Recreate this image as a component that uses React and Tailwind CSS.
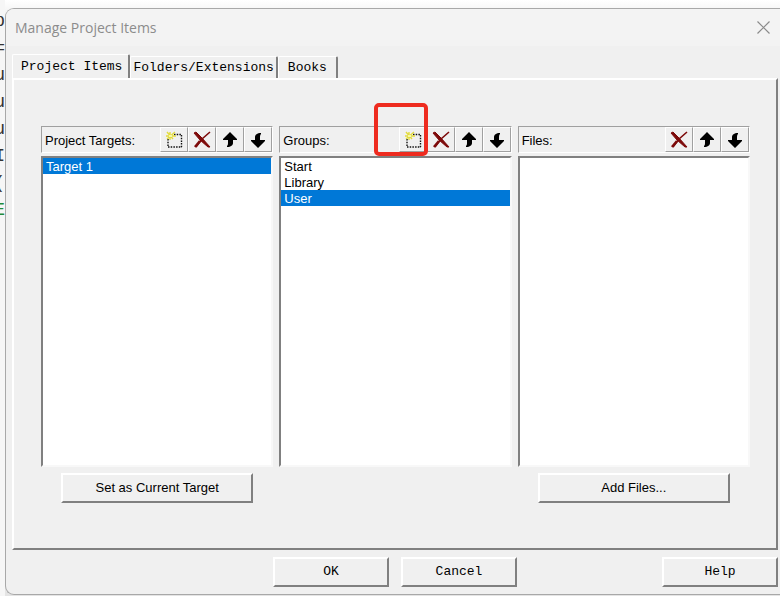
import { useState } from 'react';

const TABS = ['Project Items', 'Folders/Extensions', 'Books'];

const CODE_LINES = ['p', '=', 'u', 'u', 'u', 'I', '(', 'E'];

function NewIcon() {
  return (
    <svg width="18" height="18" viewBox="0 0 18 18" fill="none" aria-hidden="true">
      <path d="M9 3.5H17M16.5 4V16M3 16H17M3 8V16" stroke="#111" strokeWidth="1.4" strokeDasharray="1.5 1.2" />
      <path d="M5 1V9M1 5H11M2 1L8 8M10 1L2 8" stroke="#e3dc3c" strokeWidth="1.4" />
      <path d="M4 4H7V6H4Z" fill="#f7f6a8" />
    </svg>
  );
}

function DeleteIcon() {
  return (
    <svg width="18" height="18" viewBox="0 0 18 18" fill="none" stroke="#7d0a0a" aria-hidden="true">
      <path d="M1 2L3 1L9 7L17 16L15 16L7 9Z" fill="#7d0a0a" strokeWidth="1" />
      <path d="M17 1L9 8L3 16" strokeWidth="1.6" />
      <path d="M7 10L2 16" strokeWidth="2.6" />
    </svg>
  );
}

function UpIcon() {
  return (
    <svg width="16" height="16" viewBox="0 0 16 16" aria-hidden="true">
      <path d="M8 0L15 7V8H11V11C11 13 9 15 5 15V14C6 13 6 12 6 10V8H1V7Z" fill="#000" />
    </svg>
  );
}

function DownIcon() {
  return (
    <svg width="16" height="16" viewBox="0 0 16 16" aria-hidden="true">
      <path d="M8 16L1 9V8H5V5C5 3 7 1 11 1V2C10 3 10 4 10 6V8H15V9Z" fill="#000" />
    </svg>
  );
}

const ACTIONS = {
  new: { label: 'New (Insert)', Icon: NewIcon },
  delete: { label: 'Delete', Icon: DeleteIcon },
  up: { label: 'Move up', Icon: UpIcon },
  down: { label: 'Move down', Icon: DownIcon },
};

function PushButton({ children, className }) {
  return (
    <button
      type="button"
      className={`border-2 border-t-white border-l-white border-r-[#808080] border-b-[#808080] bg-[#f0f0f0] text-[13px] leading-4 ${className}`}
    >
      {children}
    </button>
  );
}

function ListColumn({ title, actions, items = [], initial, marked, footer }) {
  const [selected, setSelected] = useState(initial);

  return (
    <section className="min-w-0">
      <div className="relative flex h-[27px] items-stretch border border-t-[#a0a0a0] border-l-[#a0a0a0] border-r-white border-b-white">
        <h2 className="flex-1 self-center pt-[2px] pl-[3px] text-[13px] leading-4">{title}</h2>
        {actions.map((key) => {
          const { label, Icon } = ACTIONS[key];
          return (
            <button
              key={key}
              type="button"
              aria-label={label}
              className="flex w-7 items-center justify-center border border-t-white border-l-white border-r-[#a0a0a0] border-b-[#a0a0a0] bg-[#f0f0f0]"
            >
              <Icon />
            </button>
          );
        })}
        {marked && (
          <div className="pointer-events-none absolute -top-6 right-[83px] h-[53px] w-[54px] rounded-[5px] border-4 border-[#ee2b1f]" />
        )}
      </div>

      <ul className="mt-[3px] h-[311px] border-2 border-t-[#808080] border-l-[#808080] border-r-[#f8f8f8] border-b-[#f8f8f8] bg-white text-[13px]">
        {items.map((item) => (
          <li key={item}>
            <button
              type="button"
              onClick={() => setSelected(item)}
              className={`block w-full pt-px pl-[3px] text-left leading-[15px] ${
                selected === item ? 'bg-[#0078d7] text-white' : 'text-black'
              }`}
            >
              {item}
            </button>
          </li>
        ))}
      </ul>

      {footer && <PushButton className="mx-auto mt-[6px] block h-[30px] w-[192px]">{footer}</PushButton>}
    </section>
  );
}

export default function App() {
  const [tab, setTab] = useState(TABS[0]);

  return (
    <div className="flex min-h-screen bg-gradient-to-b from-white to-[#e4e4e4] to-5% font-['Liberation_Sans',Arial,sans-serif] text-black">
      <div className="w-[5px] shrink-0 overflow-hidden bg-[#f6f6f6] pt-2 font-['Liberation_Mono',monospace] text-[18px] leading-[27px]">
        {CODE_LINES.map((ch, i) => (
          <div key={i} className={`flex justify-end ${ch === 'E' ? 'text-[#1f8a3a]' : 'text-[#333]'}`}>
            {ch}
          </div>
        ))}
      </div>

      <main className="mt-2 mb-px min-w-0 flex-1 rounded-l-[9px] border border-r-0 border-[#a8a8a8] bg-[#f0f0f0]">
        <header className="flex h-[37px] items-center justify-between rounded-tl-[8px] bg-[#f3f3f3] pr-[10px] pl-[9px]">
          <h1 className="font-['Open_Sans','Noto_Sans',sans-serif] text-[14px] leading-5 text-[#8c8c8c]">
            Manage Project Items
          </h1>
          <button type="button" aria-label="Close">
            <svg width="13" height="13" viewBox="0 0 13 13" stroke="#8a8a8a" strokeWidth="1.2" aria-hidden="true">
              <path d="M0.5 0.5L12.5 12.5M12.5 0.5L0.5 12.5" />
            </svg>
          </button>
        </header>

        <div className="px-[2px] pt-2 pl-[6px]">
          <nav className="flex items-end font-['Liberation_Mono',monospace] text-[13px] leading-4">
            {TABS.map((name) => (
              <button
                key={name}
                type="button"
                onClick={() => setTab(name)}
                className={`rounded-t-[2px] border-t border-l border-r-2 border-t-white border-l-white border-r-[#808080] whitespace-nowrap ${
                  tab === name ? 'h-6 pr-[6px] pl-2' : 'h-[22px] px-[2px]'
                } ${name === 'Books' ? 'w-[60px]' : ''}`}
              >
                {name}
              </button>
            ))}
          </nav>

          <div className="border-2 border-t-white border-l-white border-r-[#808080] border-b-[#808080] pt-[46px] pr-[26px] pb-[45px] pl-[27px]">
            <div className="grid grid-cols-3 gap-[6px]">
              <ListColumn
                title="Project Targets:"
                actions={['new', 'delete', 'up', 'down']}
                items={['Target 1']}
                initial="Target 1"
                footer="Set as Current Target"
              />
              <ListColumn
                title="Groups:"
                actions={['new', 'delete', 'up', 'down']}
                items={['Start', 'Library', 'User']}
                initial="User"
                marked
              />
              <ListColumn title="Files:" actions={['delete', 'up', 'down']} footer="Add Files..." />
            </div>
          </div>

          <footer className="grid grid-cols-[1fr_auto_1fr] py-[7px] font-['Liberation_Mono',monospace]">
            <div className="col-start-2 flex gap-3">
              <PushButton className="h-[30px] w-[116px]">OK</PushButton>
              <PushButton className="h-[30px] w-[116px]">Cancel</PushButton>
            </div>
            <PushButton className="h-[30px] w-[116px] justify-self-end">Help</PushButton>
          </footer>
        </div>
      </main>
    </div>
  );
}
